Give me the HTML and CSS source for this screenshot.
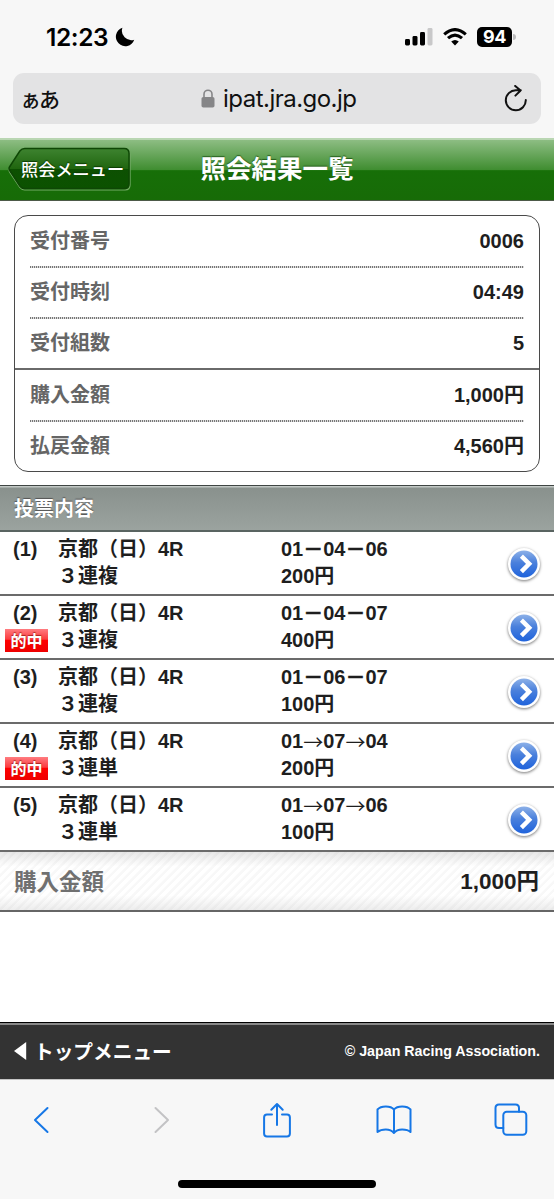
FILE: index.html
```html
<!DOCTYPE html>
<html lang="ja">
<head>
<meta charset="utf-8">
<title>照会結果一覧</title>
<link rel="stylesheet" href="styles.css">
</head>
<body>
<svg class="defs" width="0" height="0" aria-hidden="true">
  <defs>
    <linearGradient id="blue" x1="0" y1="0" x2="0" y2="1">
      <stop offset="0" stop-color="#8db1e8"/><stop offset=".45" stop-color="#4a80dc"/><stop offset="1" stop-color="#1f63dc"/>
    </linearGradient>
    <symbol id="go" viewBox="0 0 40 42">
      <circle cx="20" cy="20" r="16" fill="#fff"/>
      <circle cx="20" cy="20" r="13.5" fill="url(#blue)"/>
      <path d="M17.4 12.2 25.2 19.8 17.4 27.6" fill="none" stroke="#fff" stroke-width="4.4"/>
    </symbol>
  </defs>
</svg>

<div class="status">
  <span class="time">12:23</span>
  <svg class="moon" width="20" height="20" viewBox="0 0 20 20"><path d="M7.4 .8A9.4 9.4 0 1 0 19.2 12.7A9.4 9.4 0 0 1 7.4 .8Z"/></svg>
  <div class="signals">
    <svg width="28" height="18" viewBox="0 0 28 18"><rect x="0" y="11" width="5" height="6.5" rx="1.4"/><rect x="7.5" y="8" width="5" height="9.5" rx="1.4"/><rect x="15" y="4" width="5" height="13.5" rx="1.4"/><rect x="22.5" y="0" width="5" height="17.5" rx="1.4" fill="#c8c8c9"/></svg>
    <svg class="wifi" width="24" height="18" viewBox="0 0 24 18"><g fill="none" stroke="#000" stroke-width="3.1"><path d="M1.2 6.3Q12 -3.1 22.8 6.3"/><path d="M5 10.2Q12 3.9 19 10.2"/></g><path d="M12 17.4 8.2 13.5Q12 10.4 15.8 13.5Z"/></svg>
    <span class="battery">94</span><span class="nub"></span>
  </div>
</div>

<div class="urlbar">
  <span class="reader">ぁあ</span>
  <svg class="lock" width="14" height="19" viewBox="0 0 14 19"><path d="M3 9V5.2a4 4 0 0 1 8 0V9" fill="none" stroke="#858587" stroke-width="1.6"/><rect x=".5" y="8" width="13" height="10.6" rx="1.8" fill="#858587"/></svg>
  <span class="url">ipat.jra.go.jp</span>
  <svg class="reload" width="24" height="28" viewBox="0 0 24 28"><path d="M21.8 15.1A10 10 0 1 1 12 5.3H16.8M11.2 .9 16.6 5.5 11.4 10.6" fill="none" stroke="#111" stroke-width="2" stroke-linecap="round" stroke-linejoin="round"/></svg>
</div>

<header class="header">
  <div class="back">
    <svg class="back-shape" width="124" height="44" viewBox="0 0 126 44" preserveAspectRatio="none">
      <defs><linearGradient id="bk" x1="0" y1="0" x2="0" y2="1"><stop offset="0" stop-color="#3e8330"/><stop offset=".5" stop-color="#20660f"/><stop offset=".51" stop-color="#0d5002"/><stop offset="1" stop-color="#0b5200"/></linearGradient></defs>
      <path d="M17 2.5H119Q124 2.5 124 7.5V38Q124 43 119 43H17Q14 43 12 40.5L1.5 25Q.6 23 1.5 21L12 5Q14 2.5 17 2.5Z" fill="none" stroke="#76ab68" stroke-width="1.2"/>
      <path d="M17 1.5H118Q123 1.5 123 6.5V36.500Q123 41.500 118 41.500H17Q14 41.500 12 39L1.500 23Q.6 21.500 1.500 20L12 4Q14 1.500 17 1.500Z" fill="url(#bk)" stroke="#0e4705" stroke-width="1.5"/>
    </svg>
    <span class="back-text">照会メニュー</span>
  </div>
  <h1 class="title">照会結果一覧</h1>
</header>

<main class="page">
  <dl class="card">
    <div class="item"><dt>受付番号</dt><dd>0006</dd></div>
    <div class="item"><dt>受付時刻</dt><dd>04:49</dd></div>
    <div class="item"><dt>受付組数</dt><dd>5</dd></div>
    <div class="item group"><dt>購入金額</dt><dd>1,000円</dd></div>
    <div class="item"><dt>払戻金額</dt><dd>4,560円</dd></div>
  </dl>

  <h2 class="section">投票内容</h2>
  <div class="bets">
    <div class="bet"><div class="no">(1)</div><div class="race">京都（日）4R<br>３連複</div><div class="pick">01<span class="dash">－</span>04<span class="dash">－</span>06<br>200円</div><svg class="go" width="40" height="42"><use href="#go"/></svg></div>
    <div class="bet"><div class="no">(2)<span class="hit">的中</span></div><div class="race">京都（日）4R<br>３連複</div><div class="pick">01<span class="dash">－</span>04<span class="dash">－</span>07<br>400円</div><svg class="go" width="40" height="42"><use href="#go"/></svg></div>
    <div class="bet"><div class="no">(3)</div><div class="race">京都（日）4R<br>３連複</div><div class="pick">01<span class="dash">－</span>06<span class="dash">－</span>07<br>100円</div><svg class="go" width="40" height="42"><use href="#go"/></svg></div>
    <div class="bet"><div class="no">(4)<span class="hit">的中</span></div><div class="race">京都（日）4R<br>３連単</div><div class="pick">01<span class="arrow">→</span>07<span class="arrow">→</span>04<br>200円</div><svg class="go" width="40" height="42"><use href="#go"/></svg></div>
    <div class="bet"><div class="no">(5)</div><div class="race">京都（日）4R<br>３連単</div><div class="pick">01<span class="arrow">→</span>07<span class="arrow">→</span>06<br>100円</div><svg class="go" width="40" height="42"><use href="#go"/></svg></div>
  </div>
  <div class="total"><span class="total-label">購入金額</span><span class="total-sum">1,000円</span></div>
</main>

<footer class="footer">
  <span class="top"><svg width="13" height="18" viewBox="0 0 13 18"><path d="M12.200 0V18L0 9Z" fill="#fff"/></svg>トップメニュー</span>
  <span class="copy">© Japan Racing Association.</span>
</footer>

<nav class="toolbar">
  <div class="tools">
    <svg width="16" height="28" viewBox="0 0 16 28"><path d="M14.500 2 2 14 14.500 26"/></svg>
    <svg class="off" width="16" height="28" viewBox="0 0 16 28"><path d="M1.500 2 14 14 1.500 26"/></svg>
    <svg width="28" height="36" viewBox="0 0 28 36"><path d="M9 12.400H4Q1.100 12.400 1.100 15.400V31.500Q1.100 34.600 4 34.600H24Q26.900 34.600 26.900 31.500V15.400Q26.900 12.400 24 12.400H19M14 23V2M8.300 7.700 14 2 19.700 7.700"/></svg>
    <svg width="36" height="30" viewBox="0 0 36 30"><path d="M18 4.500Q15.500 1.500 9.800 1.500T1.500 4.500V27Q4.500 24.400 9.800 24.400T18 28Q20.500 24.400 26.200 24.400T34.500 27V4.500Q32 1.500 26.200 1.500T18 4.500ZV28"/></svg>
    <svg width="34" height="34" viewBox="0 0 34 34"><path d="M9.300 25H5Q1.500 25 1.500 21.500V5Q1.500 1.500 5 1.500H21.500Q25 1.500 25 5V8.700"/><rect x="9.300" y="8.700" width="23" height="23" rx="3.500"/></svg>
  </div>
  <div class="home"></div>
</nav>
</body>
</html>
```

FILE: styles.css
```css
* { box-sizing: border-box; }
body {
  margin: 0;
  height: 1199px;
  display: flex;
  flex-direction: column;
  overflow: hidden;
  background: #f7f7f7;
  color: #1e1e1e;
  font: bold 20px "Liberation Sans", "Noto Sans CJK JP", sans-serif;
}
.defs { position: absolute; }
svg { display: block; flex: none; }

.status { height: 73px; padding: 0 38px 0 46px; display: flex; align-items: center; color: #000; }
.time { font: 600 24.500px/30px Inter, sans-serif; letter-spacing: -.4px; }
.moon { margin-left: 7px; }
.signals { margin-left: auto; display: flex; align-items: center; }
.wifi { margin-left: 10px; }
.battery {
  width: 35px; height: 20px; margin-left: 10px;
  border-radius: 5px; background: #000; color: #fff;
  font: 700 18px/20px Inter, sans-serif; letter-spacing: -.5px; text-align: center;
}
.nub { width: 3px; height: 6px; margin-left: 1px; border-radius: 0 3px 3px 0; background: #bcbcbd; }

.urlbar {
  height: 51px; margin: 0 13px; padding: 0 13px 0 7px;
  display: flex; align-items: center;
  border-radius: 11px; background: #e3e3e4; color: #111;
}
.reader { width: 181px; font: 500 21px/26px "Noto Sans CJK JP", sans-serif; letter-spacing: -2px; padding-bottom: 2px; }
.lock { margin-right: 8px; }
.url { font: 400 24px/30px Inter, sans-serif; letter-spacing: -.52px; }
.reload { margin-left: auto; }

.header {
  position: relative;
  height: 63px; margin-top: 14px;
  display: flex; justify-content: center;
  border-top: 2px solid #b9d6b2;
  border-bottom: 1px solid #4d5a49;
  background: linear-gradient(#8dbd83 0, #3f8d30 50%, #176f08 51%, #176b07 100%);
  color: #fff;
}
.back { position: absolute; left: 8px; top: 7px; width: 126px; height: 44px; }
.back-shape { position: absolute; left: 0; top: 0; }
.back-text {
  position: relative; display: block; padding-left: 13px;
  font: 500 17.200px/43px "Noto Sans CJK JP", sans-serif;
  text-shadow: 0 -1px 1px #0a3c02; white-space: nowrap;
}
.title { margin: 0; font: 700 25.500px/54px "Noto Sans CJK JP", sans-serif; text-shadow: 0 -1px 1px #245c1b; }

.page { height: 821px; background: #fff; padding-top: 14px; }
.card {
  margin: 0 14px; height: 257px;
  border: 1.500px solid #4a4a4a; border-radius: 14px;
}
.item {
  position: relative;
  height: 51.200px; padding: 0 15px;
  display: flex; justify-content: space-between; line-height: 51px;
}
.item dt { color: #666; font-family: "Noto Sans CJK JP", sans-serif; line-height: 48px; }
.item dd { margin: 0; line-height: 50px; }
.item + .item:not(.group)::before {
  content: ""; position: absolute; left: 15px; right: 15px; top: -1px; height: 2px;
  background: repeating-linear-gradient(90deg, #777 0 1px, #ddd 1px 2px);
}
.group::before { content: ""; position: absolute; left: 0; right: 0; top: -2px; height: 2px; background: #6a6a6a; }

.section {
  margin: 13px 0 0; height: 47px; padding-left: 14px;
  border-top: 1px solid #3f4543; border-bottom: 2px solid #596461;
  background: linear-gradient(#c2c8c5 0, #c2c8c5 1px, #89918d 2px, #9ba39f 100%);
  color: #fff; font: 700 20px/44px "Noto Sans CJK JP", sans-serif;
  text-shadow: 0 -1px 1px #555;
}
.bet {
  height: 64px; padding-top: 4px;
  display: grid; grid-template-columns: 58px 223px 223px 40px;
  border-bottom: 2px solid #6b6b6b; line-height: 27px;
}
.no { position: relative; padding-left: 13px; }
.hit {
  position: absolute; left: 5px; top: 29px; width: 43px; height: 23px;
  background: linear-gradient(#ff7c80 0, #fb3b3e 45%, #f00 48%, #ee0000 100%);
  color: #fff; font: 700 16px/22px "Noto Sans CJK JP", sans-serif; text-align: center;
  text-shadow: 0 -1px 1px #a22;
}
.dash { position: relative; top: 1px; -webkit-text-stroke: .5px #1e1e1e; }
.arrow { position: relative; top: 2px; font-family: "Noto Sans CJK JP", sans-serif; font-weight: 400; line-height: 1; }
.go { margin-top: 8px; filter: drop-shadow(0 1px 1.500px #777); }

.total {
  height: 60px; padding: 0 15px 0 14px;
  display: flex; justify-content: space-between;
  border-bottom: 2px solid #666;
  background: linear-gradient(rgba(215,215,215,.6) 0, rgba(255,255,255,.5) 25%, rgba(255,255,255,.5) 75%, rgba(225,225,225,.6) 100%),
    repeating-linear-gradient(135deg, #fff 0 3px, #f1f1f1 4px 6px);
  font-size: 22.500px; line-height: 60px;
}
.total-label { color: #707070; font-family: "Noto Sans CJK JP", sans-serif; line-height: 57px; }

.footer {
  height: 58px; padding: 0 14px;
  display: flex; align-items: center; justify-content: space-between;
  border-top: 1px solid #000; border-bottom: 1px solid #c5c5c5;
  background: linear-gradient(#888 0, #888 2px, #333 2px);
  color: #fff;
}
.top { display: flex; align-items: center; gap: 7px; font: 700 19.700px/56px "Noto Sans CJK JP", sans-serif; }
.copy { font-size: 14.250px; }

.toolbar { height: 119px; padding-top: 20px; display: flex; flex-direction: column; align-items: center; }
.tools {
  width: 100%; height: 40px; padding-left: 33px;
  display: grid; grid-template-columns: 121px 109px 113px 118px auto; align-items: center;
}
.tools path, .tools rect { fill: none; stroke: #1677e6; stroke-width: 2; stroke-linecap: round; stroke-linejoin: round; }
.tools .off path { stroke: #c3c3c5; }
.home { width: 198px; height: 8px; margin-top: 40px; border-radius: 4px; background: #000; }
```
